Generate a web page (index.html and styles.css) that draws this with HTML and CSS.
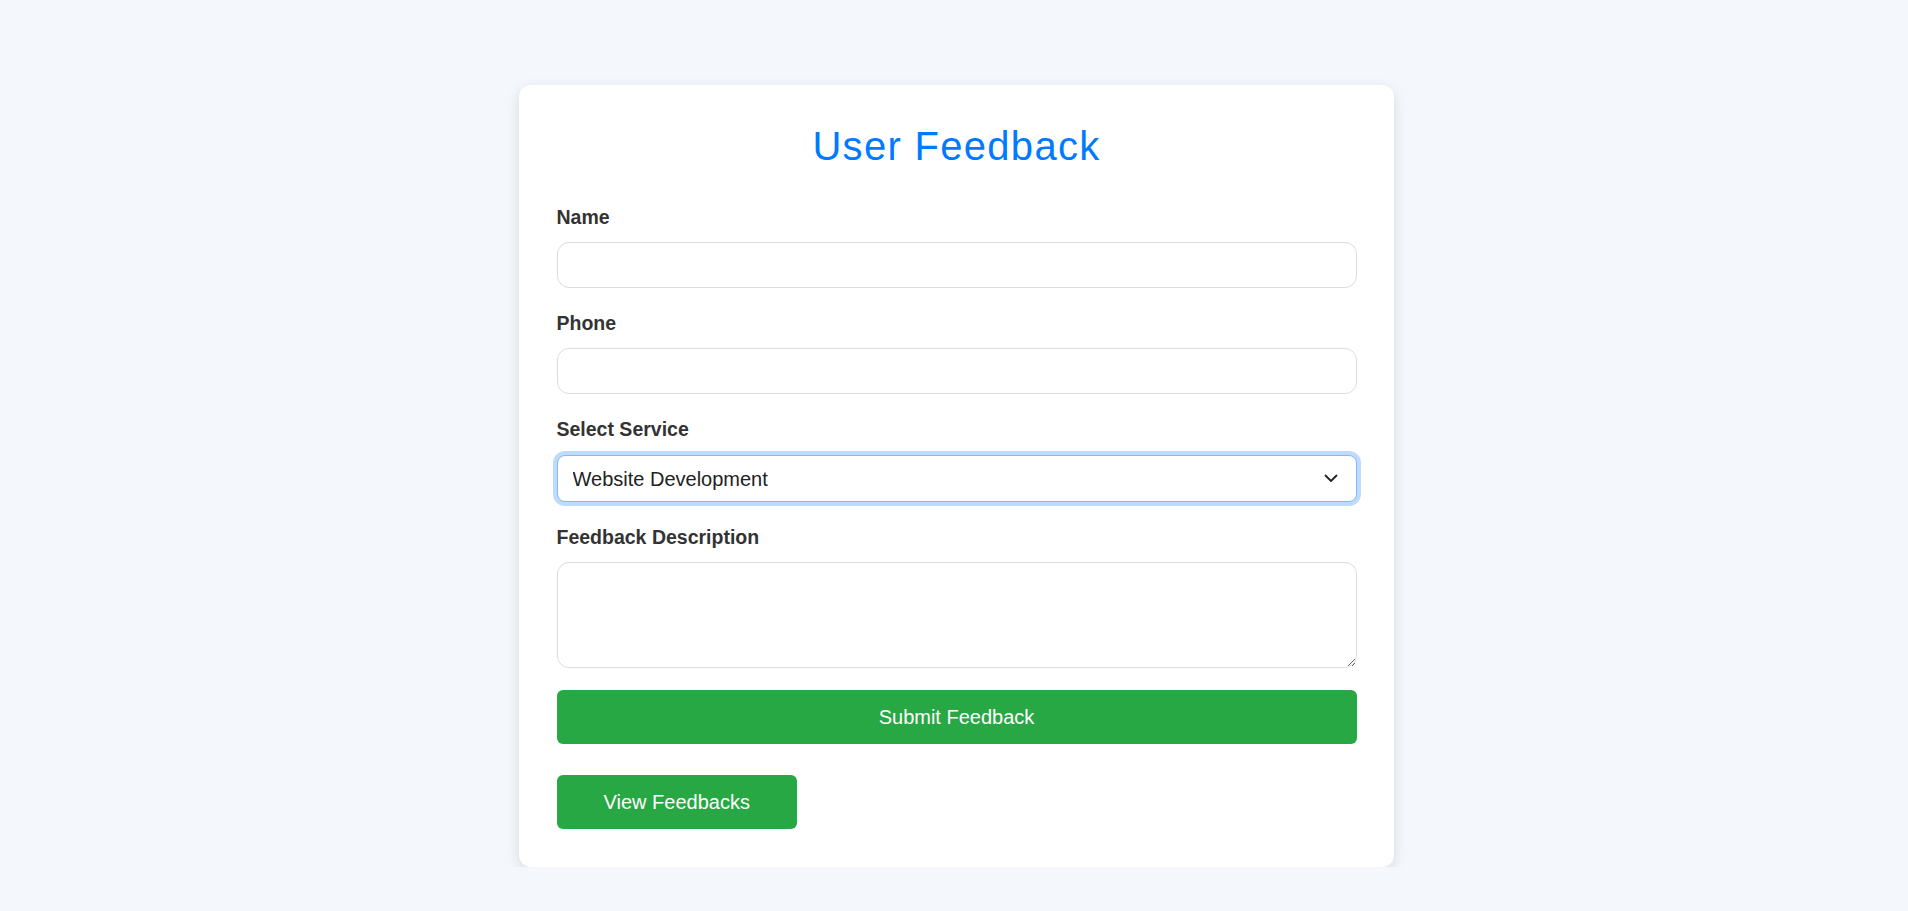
FILE: index.html
```html
<!DOCTYPE html>
<html lang="en">
<head>
<meta charset="utf-8">
<title>User Feedback</title>
<link rel="stylesheet" href="styles.css">
</head>
<body>
<div class="card">
  <h1 class="title">User Feedback</h1>
  <form class="form">
    <div class="group">
      <label class="label" for="name">Name</label>
      <input class="field" id="name" type="text">
    </div>
    <div class="group">
      <label class="label" for="phone">Phone</label>
      <input class="field" id="phone" type="text">
    </div>
    <div class="group">
      <label class="label" for="service">Select Service</label>
      <div class="select-wrap">
        <select class="field select focused" id="service">
          <option>Website Development</option>
          <option>Mobile App Development</option>
          <option>SEO Services</option>
        </select>
        <svg class="chevron" width="14" height="9" viewBox="0 0 14 9" aria-hidden="true">
          <path d="M1.5 1.5 L7 7 L12.5 1.5" fill="none" stroke="#222" stroke-width="1.8" stroke-linecap="round" stroke-linejoin="round"/>
        </svg>
      </div>
    </div>
    <div class="group group-last">
      <label class="label" for="desc">Feedback Description</label>
      <textarea class="field textarea" id="desc"></textarea>
    </div>
    <button class="btn btn-submit" type="button">Submit Feedback</button>
  </form>
  <button class="btn btn-view" type="button">View Feedbacks</button>
</div>
</body>
</html>
```

FILE: styles.css
```css
html, body {
  margin: 0;
  padding: 0;
}

body {
  background: #f4f7fb;
  font-family: "Liberation Sans", Arial, sans-serif;
  color: #333;
  padding-left: 5px;
}

.card {
  box-sizing: border-box;
  width: 875px;
  margin: 85px auto 0;
  padding: 37.5px 37.5px 38.5px;
  background: #ffffff;
  border-radius: 12px;
  box-shadow: 0 4px 14px rgba(0, 0, 0, 0.12);
}

.title {
  margin: 0 0 37px;
  font-size: 40px;
  line-height: 46px;
  font-weight: normal;
  letter-spacing: 1.3px;
  color: #007bff;
  text-align: center;
}

.form {
  margin: 0;
}

.group {
  margin-bottom: 24px;
}

.group-last {
  margin-bottom: 21.5px;
}

.label {
  display: block;
  margin-bottom: 14px;
  font-size: 19.5px;
  line-height: 22.4px;
  font-weight: bold;
  color: #333;
}

.field {
  display: block;
  box-sizing: border-box;
  width: 100%;
  height: 46px;
  margin: 0;
  padding: 0 15px;
  border: 1px solid #dcdcdc;
  border-radius: 12px;
  background: #fff;
  font-family: "Liberation Sans", Arial, sans-serif;
  font-size: 20px;
  color: #222;
  outline: none;
}

.select-wrap {
  position: relative;
}

.select {
  height: 47px;
  -webkit-appearance: none;
  appearance: none;
  border-radius: 8px;
  padding-top: 2px;
  padding-right: 40px;
}

.select.focused {
  border-color: #86b7fe;
  box-shadow: 0 0 0 4px rgba(0, 110, 245, 0.25);
}

.chevron {
  position: absolute;
  right: 19px;
  top: 19px;
  pointer-events: none;
}

.textarea {
  height: 106px;
  padding: 12px 15px;
  resize: vertical;
}

.btn {
  display: block;
  height: 54px;
  margin: 0;
  border: none;
  border-radius: 6px;
  background: #28a745;
  color: #fff;
  font-family: "Liberation Sans", Arial, sans-serif;
  font-size: 20px;
  padding-top: 2px;
  cursor: pointer;
}

.btn-submit {
  width: 100%;
  margin-bottom: 31px;
}

.btn-view {
  padding-left: 47px;
  padding-right: 47px;
}
```
